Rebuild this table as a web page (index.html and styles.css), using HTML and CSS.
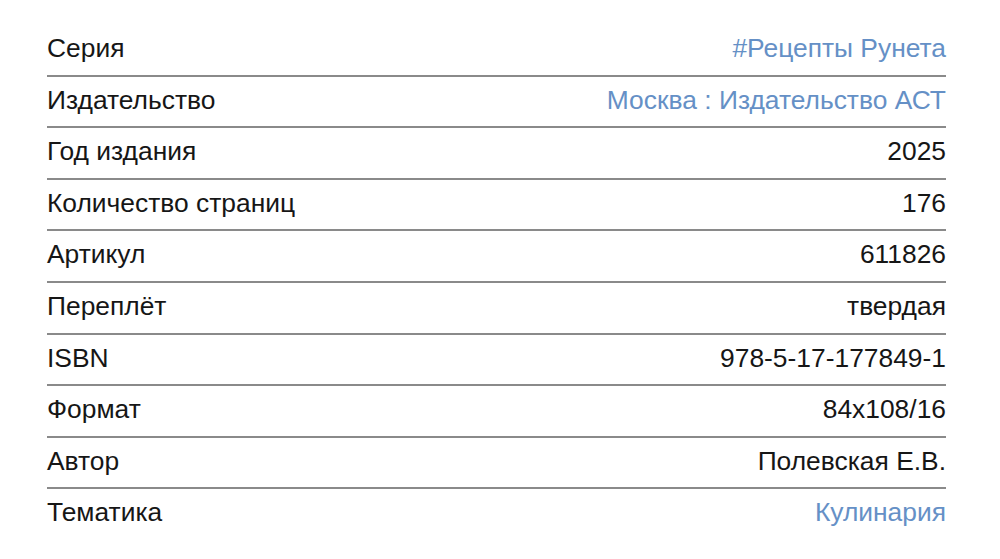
FILE: index.html
```html
<!DOCTYPE html>
<html lang="ru">
<head>
<meta charset="utf-8">
<link rel="stylesheet" href="styles.css">
</head>
<body>
<div class="props">
  <div class="row"><span class="k">Серия</span><span class="v link">#Рецепты Рунета</span></div>
  <div class="row"><span class="k">Издательство</span><span class="v link">Москва : Издательство АСТ</span></div>
  <div class="row"><span class="k">Год издания</span><span class="v">2025</span></div>
  <div class="row"><span class="k">Количество страниц</span><span class="v">176</span></div>
  <div class="row"><span class="k">Артикул</span><span class="v">611826</span></div>
  <div class="row"><span class="k">Переплёт</span><span class="v">твердая</span></div>
  <div class="row"><span class="k">ISBN</span><span class="v">978-5-17-177849-1</span></div>
  <div class="row"><span class="k">Формат</span><span class="v">84x108/16</span></div>
  <div class="row"><span class="k">Автор</span><span class="v">Полевская Е.В.</span></div>
  <div class="row"><span class="k">Тематика</span><span class="v link">Кулинария</span></div>
</div>
</body>
</html>
```
FILE: styles.css
```css
html, body {
  margin: 0;
  padding: 0;
  background: #ffffff;
}
body {
  font-family: "Liberation Sans", Arial, sans-serif;
  font-size: 26.4px;
  color: #161616;
}
.props {
  width: 899px;
  margin-left: 47px;
  padding-top: 25px;
}
.row {
  display: flex;
  justify-content: space-between;
  align-items: center;
  line-height: 30px;
  padding-top: 8px;
  padding-bottom: 11.6px;
  border-bottom: 2px solid #8a8a8a;
}
.row:last-child {
  border-bottom: none;
}
.link {
  color: #6590c6;
}
```
